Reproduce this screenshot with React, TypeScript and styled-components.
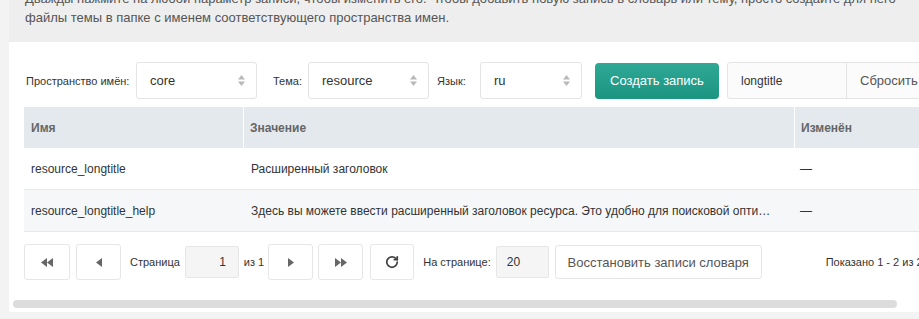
import React from 'react';
import styled, { createGlobalStyle } from 'styled-components';
import { RotateCw } from 'lucide-react';

const GlobalStyle = createGlobalStyle`
  html, body {
    margin: 0;
    padding: 0;
    overflow: hidden;
    background: #f3f3f3;
  }
  body {
    font-family: "Liberation Sans", Arial, sans-serif;
  }
  * { box-sizing: border-box; }
`;

const Page = styled.div`
  margin-top: -26px;
  padding-left: 9px;
  width: 1200px;
`;

const Description = styled.div`
  background: #eeeeee;
  padding: 15px 16px;
  color: #555;
  font-size: 13px;
  line-height: 19px;
`;

const DescText = styled.p`
  margin: 0;
  max-width: 885px;
`;

const Panel = styled.div`
  background: #fff;
  padding: 20px 0 4px 4px;
  border-radius: 0 0 3px 3px;
`;

const Content = styled.div`
  padding-left: 11px;
`;

const Toolbar = styled.div`
  display: flex;
  align-items: center;
  height: 37px;
  padding-left: 2px;
`;

const Label = styled.span<{ $width: number; $ml?: number }>`
  width: ${(p) => p.$width}px;
  margin-left: ${(p) => p.$ml ?? 0}px;
  font-size: 11px;
  color: #333;
  flex: none;
  white-space: nowrap;
`;

const Select = styled.div<{ $width: number }>`
  width: ${(p) => p.$width}px;
  height: 37px;
  flex: none;
  border: 1px solid #e4e4e4;
  border-radius: 3px;
  background: #fff;
  display: flex;
  align-items: center;
  justify-content: space-between;
  padding: 0 11px 0 13px;
  font-size: 13px;
  color: #333;
`;

const PrimaryButton = styled.button<{ $ml?: number }>`
  margin-left: ${(p) => p.$ml ?? 0}px;
  width: 124px;
  height: 36px;
  flex: none;
  border: none;
  border-radius: 4px;
  background: linear-gradient(#2fa897, #1b9480);
  color: #fff;
  font-family: inherit;
  font-size: 13px;
  padding: 0;
`;

const SearchGroup = styled.div<{ $ml?: number }>`
  margin-left: ${(p) => p.$ml ?? 0}px;
  display: flex;
  height: 37px;
  flex: none;
  border: 1px solid #e4e4e4;
  border-radius: 3px;
  background: #fbfbfb;
`;

const SearchInput = styled.div`
  width: 118px;
  display: flex;
  align-items: center;
  padding-left: 13px;
  font-size: 12px;
  color: #333;
`;

const ResetButton = styled.div`
  width: 110px;
  border-left: 1px solid #e4e4e4;
  display: flex;
  align-items: center;
  padding-left: 13px;
  font-size: 13px;
  color: #555;
`;

const Table = styled.div`
  margin-top: 8px;
  width: 1150px;
`;

const Row = styled.div<{ $head?: boolean; $alt?: boolean }>`
  display: grid;
  grid-template-columns: 219px 551px 1fr;
  height: ${(p) => (p.$head ? 41 : 42)}px;
  background: ${(p) => (p.$head ? '#e4e9ee' : p.$alt ? '#f6f7f9' : '#fff')};
  border-bottom: ${(p) => (p.$head ? 'none' : '1px solid #e4e9ee')};
`;

const HeadCell = styled.div<{ $sep?: boolean }>`
  display: flex;
  align-items: center;
  padding-left: ${(p) => (p.$sep ? 6 : 7)}px;
  border-left: ${(p) => (p.$sep ? '1px solid #fff' : 'none')};
  font-size: 12px;
  font-weight: bold;
  color: #666;
`;

const Cell = styled.div<{ $pl?: number }>`
  display: flex;
  align-items: center;
  padding-left: ${(p) => p.$pl ?? 7}px;
  padding-right: 22px;
  font-size: 12px;
  color: #333;
  min-width: 0;
  overflow: hidden;
`;

const Clip = styled.span`
  white-space: nowrap;
  overflow: hidden;
  text-overflow: ellipsis;
`;

const PagBar = styled.div`
  display: flex;
  align-items: center;
  margin-top: 12px;
  height: 36px;
`;

const PagButton = styled.div<{ $ml?: number; $w?: number }>`
  margin-left: ${(p) => p.$ml ?? 0}px;
  width: ${(p) => p.$w ?? 45}px;
  height: 36px;
  flex: none;
  border: 1px solid #e6e6e6;
  border-radius: 3px;
  background: #fff;
  display: flex;
  align-items: center;
  justify-content: center;
  color: #666;
`;

const PagText = styled.span<{ $ml?: number }>`
  margin-left: ${(p) => p.$ml ?? 0}px;
  font-size: 11px;
  color: #333;
  white-space: nowrap;
  flex: none;
`;

const PagInput = styled.div<{ $ml?: number; $w: number; $right?: boolean }>`
  margin-left: ${(p) => p.$ml ?? 0}px;
  width: ${(p) => p.$w}px;
  height: 32px;
  flex: none;
  border: 1px solid #e6e6e6;
  border-radius: 2px;
  background: #f5f5f5;
  display: flex;
  align-items: center;
  justify-content: ${(p) => (p.$right ? 'flex-end' : 'flex-start')};
  padding: ${(p) => (p.$right ? '0 12px 0 0' : '0 0 0 10px')};
  font-size: 12px;
  color: #333;
`;

const TextButton = styled.div<{ $ml?: number }>`
  margin-left: ${(p) => p.$ml ?? 0}px;
  width: 207px;
  height: 34px;
  flex: none;
  border: 1px solid #e6e6e6;
  border-radius: 3px;
  background: #fff;
  display: flex;
  align-items: center;
  justify-content: center;
  font-size: 13px;
  color: #555;
`;

const Scrollbar = styled.div`
  margin-top: 20px;
  width: 884px;
  height: 8px;
  border-radius: 4px;
  background: #dcdcdc;
`;

const SelectArrows = () => (
  <svg width="7" height="11" viewBox="0 0 7 11">
    <polygon points="0,4.5 3.5,0 7,4.5" fill="#b8b8b8" />
    <polygon points="0,6.5 3.5,11 7,6.5" fill="#b8b8b8" />
  </svg>
);

const Tri = ({ dir, double }: { dir: 'l' | 'r'; double?: boolean }) => {
  const one = (x: number) =>
    dir === 'l'
      ? `${x + 6},0 ${x + 6},9 ${x},4.5`
      : `${x},0 ${x},9 ${x + 6},4.5`;
  return double ? (
    <svg width="12" height="9" viewBox="0 0 12 9">
      <polygon points={one(0)} fill="#666" />
      <polygon points={one(6)} fill="#666" />
    </svg>
  ) : (
    <svg width="6" height="9" viewBox="0 0 6 9">
      <polygon points={one(0)} fill="#666" />
    </svg>
  );
};

const rows = [
  { name: 'resource_longtitle', value: 'Расширенный заголовок', changed: '—' },
  {
    name: 'resource_longtitle_help',
    value:
      'Здесь вы можете ввести расширенный заголовок ресурса. Это удобно для поисковой оптимизации, а также для более подробного описания ресурса.',
    changed: '—',
  },
];

export default function App() {
  return (
    <>
      <GlobalStyle />
      <Page>
        <Description>
          <DescText>
            Дважды нажмите на любой параметр записи, чтобы изменить его. Чтобы добавить новую запись в словарь или тему, просто создайте для него файлы темы в папке с именем соответствующего пространства имен.
          </DescText>
        </Description>
        <Panel>
          <Content>
            <Toolbar>
              <Label $width={110}>Пространство имён:</Label>
              <Select $width={121}>
                core
                <SelectArrows />
              </Select>
              <Label $width={35} $ml={16}>Тема:</Label>
              <Select $width={121}>
                resource
                <SelectArrows />
              </Select>
              <Label $width={43} $ml={8}>Язык:</Label>
              <Select $width={102}>
                ru
                <SelectArrows />
              </Select>
              <PrimaryButton $ml={13}>Создать запись</PrimaryButton>
              <SearchGroup $ml={8}>
                <SearchInput>longtitle</SearchInput>
                <ResetButton>Сбросить</ResetButton>
              </SearchGroup>
            </Toolbar>
            <Table>
              <Row $head>
                <HeadCell>Имя</HeadCell>
                <HeadCell $sep>Значение</HeadCell>
                <HeadCell $sep>Изменён</HeadCell>
              </Row>
              {rows.map((r, i) => (
                <Row key={r.name} $alt={i % 2 === 1}>
                  <Cell>{r.name}</Cell>
                  <Cell $pl={8}>
                    <Clip>{r.value}</Clip>
                  </Cell>
                  <Cell $pl={6}>{r.changed}</Cell>
                </Row>
              ))}
            </Table>
            <PagBar>
              <PagButton $w={46}>
                <Tri dir="l" double />
              </PagButton>
              <PagButton $ml={6}>
                <Tri dir="l" />
              </PagButton>
              <PagText $ml={9}>Страница</PagText>
              <PagInput $ml={5} $w={54} $right>
                1
              </PagInput>
              <PagText $ml={5}>из 1</PagText>
              <PagButton $ml={4}>
                <Tri dir="r" />
              </PagButton>
              <PagButton $ml={5}>
                <Tri dir="r" double />
              </PagButton>
              <PagButton $ml={7} $w={44}>
                <RotateCw size={14} strokeWidth={3} color="#444" />
              </PagButton>
              <PagText $ml={9}>На странице:</PagText>
              <PagInput $ml={5} $w={53}>
                20
              </PagInput>
              <TextButton $ml={6}>Восстановить записи словаря</TextButton>
              <PagText $ml={64}>Показано 1 - 2 из 2</PagText>
            </PagBar>
          </Content>
          <Scrollbar />
        </Panel>
      </Page>
    </>
  );
}
